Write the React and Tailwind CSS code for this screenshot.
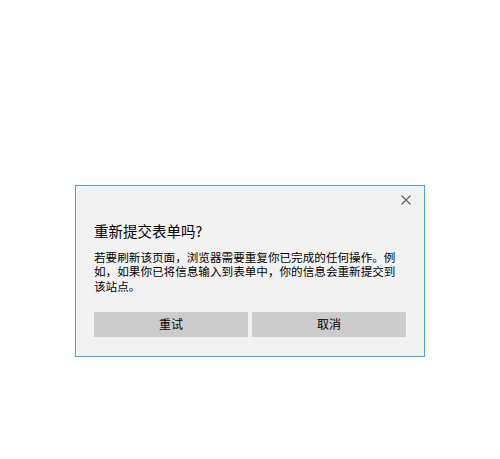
import React from 'react'

const font = { fontFamily: '"Noto Sans CJK SC", "Noto Sans", sans-serif' }

function CloseIcon() {
  return (
    <svg width="10" height="10" viewBox="0 0 10 10" className="block">
      <path d="M0.5 0.5 L9.5 9.5 M9.5 0.5 L0.5 9.5" stroke="#5f5f5f" strokeWidth="1.1" fill="none" />
    </svg>
  )
}

export default function App() {
  return (
    <div className="w-[500px] h-[459px] bg-white pt-[185px] pl-[75px]" style={font}>
      {/* Resubmit dialog */}
      <div className="w-[350px] h-[172px] border border-[#4f9fe6] bg-[#f2f2f2] px-[18px] flex flex-col">
        <div className="h-[28px] flex items-center justify-end -mr-[8px]">
          <button className="w-[16px] h-[16px] flex items-center justify-center">
            <CloseIcon />
          </button>
        </div>
        <h1 className="mt-[10px] text-[14.5px] leading-[14.5px] text-black font-normal">
          重新提交表单吗?
        </h1>
        <p className="mt-[11px] text-[11.6px] leading-[14.7px] text-black">
          若要刷新该页面，浏览器需要重复你已完成的任何操作。例如，如果你已将信息输入到表单中，你的信息会重新提交到该站点。
        </p>
        <div className="mt-[18px] grid grid-cols-2 gap-[4px]">
          <button className="h-[25px] bg-[#cccccc] text-[12px] text-black">重试</button>
          <button className="h-[25px] bg-[#cccccc] text-[12px] text-black">取消</button>
        </div>
      </div>
    </div>
  )
}
